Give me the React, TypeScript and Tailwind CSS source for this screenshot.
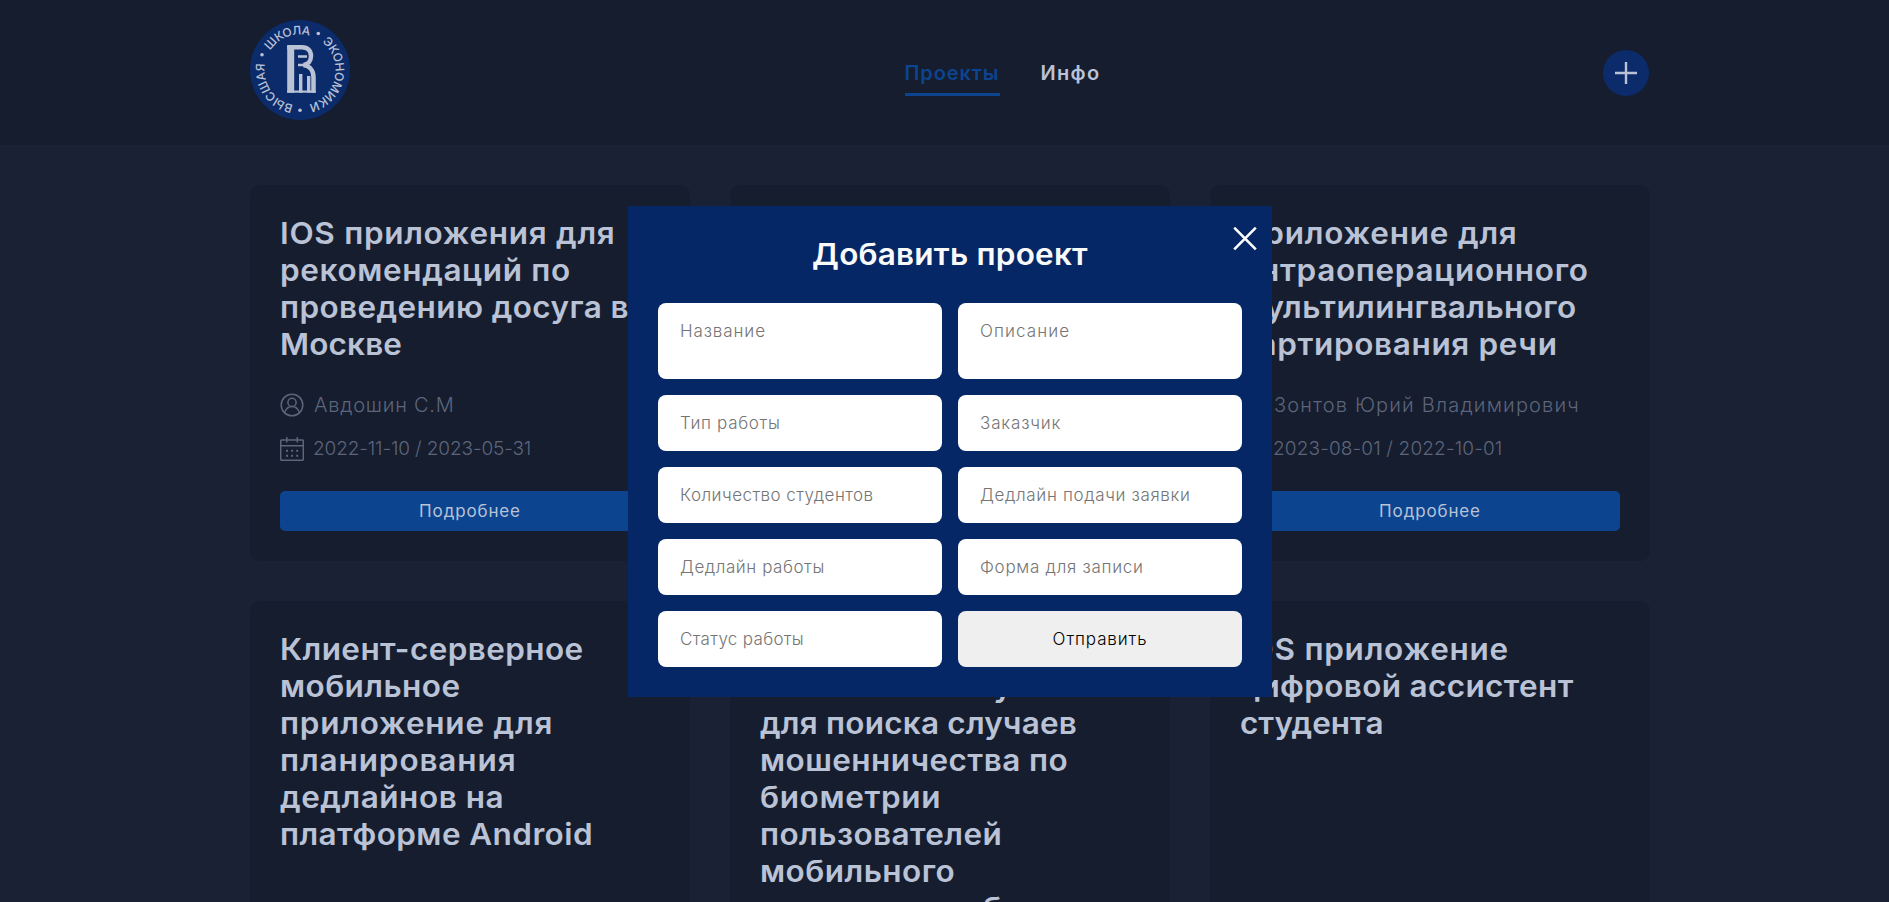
import React from "react";

type Line = [text: string, tracking: string];

interface Project {
  title: Line[];
  person: Line;
  dates: Line;
}

const defaultPerson: Line = ["Авдошин С.М", "tracking-[0.77px]"];
const defaultDates: Line = ["2022-11-10 / 2023-05-31", "tracking-[-0.12px]"];

const projects: Project[] = [
  {
    title: [
      ["IOS приложения для", "tracking-[0.66px]"],
      ["рекомендаций по", "tracking-[0.6px]"],
      ["проведению досуга в", "tracking-[0.38px]"],
      ["Москве", "tracking-[0.15px]"],
    ],
    person: defaultPerson,
    dates: defaultDates,
  },
  { title: [], person: defaultPerson, dates: defaultDates },
  {
    title: [
      ["Приложение для", "tracking-[0.74px]"],
      ["интраоперационного", "tracking-[0.65px]"],
      ["мультилингвального", "tracking-[0.38px]"],
      ["картирования речи", "tracking-[0.6px]"],
    ],
    person: ["Зонтов Юрий Владимирович", "tracking-[1.15px]"],
    dates: ["2023-08-01 / 2022-10-01", "tracking-[0.15px]"],
  },
  {
    title: [
      ["Клиент-серверное", "tracking-[0.38px]"],
      ["мобильное", "tracking-[0.4px]"],
      ["приложение для", "tracking-[0.74px]"],
      ["планирования", "tracking-[0.84px]"],
      ["дедлайнов на", "tracking-[0.5px]"],
      ["платформе Android", "tracking-[0.4px]"],
    ],
    person: defaultPerson,
    dates: defaultDates,
  },
  {
    title: [
      ["Использование", "tracking-[0.5px]"],
      ["машинного обучения", "tracking-[0.63px]"],
      ["для поиска случаев", "tracking-[0.2px]"],
      ["мошенничества по", "tracking-[0.4px]"],
      ["биометрии", "tracking-[0.6px]"],
      ["пользователей", "tracking-[0.4px]"],
      ["мобильного", "tracking-[0.44px]"],
      ["приложения с банка", "tracking-[-0.6px]"],
    ],
    person: defaultPerson,
    dates: defaultDates,
  },
  {
    title: [
      ["IOS приложение", "tracking-[0.72px]"],
      ["цифровой ассистент", "tracking-[0.34px]"],
      ["студента", "tracking-[0px]"],
    ],
    person: defaultPerson,
    dates: defaultDates,
  },
];

const fields: Line[] = [
  ["Тип работы", "tracking-[0.66px]"],
  ["Заказчик", "tracking-[0.84px]"],
  ["Количество студентов", "tracking-[0.46px]"],
  ["Дедлайн подачи заявки", "tracking-[0.65px]"],
  ["Дедлайн работы", "tracking-[0.55px]"],
  ["Форма для записи", "tracking-[0.72px]"],
  ["Статус работы", "tracking-[0.32px]"],
];

const ring = "M50 14.5 A35.5 35.5 0 1 1 50 85.5 A35.5 35.5 0 1 1 50 14.5";

function Logo() {
  return (
    <svg className="size-[100px]" viewBox="0 0 100 100">
      <circle cx="50" cy="50" r="50" fill="#0c2b6b" />
      <defs>
        <path id="ring" d={ring} />
      </defs>
      <g fill="#bac2d6" fontFamily="Inter, sans-serif" fontSize="12" fontWeight="500">
        <g transform="rotate(303 50 50)">
          <text textLength="45"><textPath href="#ring" textLength="45">ШКОЛА</textPath></text>
        </g>
        <g transform="rotate(38 50 50)">
          <text textLength="79"><textPath href="#ring" textLength="79">ЭКОНОМИКИ</textPath></text>
        </g>
        <g transform="rotate(191 50 50)">
          <text textLength="55"><textPath href="#ring" textLength="55">ВЫСШАЯ</textPath></text>
        </g>
        <circle cx="68.3" cy="13.5" r="1.8" />
        <circle cx="12" cy="34.7" r="1.8" />
        <circle cx="50" cy="90.3" r="1.8" />
      </g>
      <g fill="none" stroke="#bac2d6">
        <path d="M40.7 25.7V72.7" strokeWidth="7" />
        <path d="M37.2 27.2H52C58 27.2 61 31 61 36C61 41 58 44.5 53.5 45C60 46 63.5 51 63.5 57V72.7" strokeWidth="4.5" />
        <path d="M48 36.5H57M48 45H55" strokeWidth="2.4" />
        <path d="M50.7 72.7V54M58.7 72.7V56" strokeWidth="3.4" />
        <path d="M37.2 71.6H65.7" strokeWidth="2.2" />
      </g>
    </svg>
  );
}

function PersonIcon() {
  return (
    <svg className="size-6 shrink-0" viewBox="0 0 24 24" fill="none" stroke="#5d657b" strokeWidth="1.5">
      <circle cx="12" cy="12" r="10.8" />
      <circle cx="12" cy="9.4" r="4.1" />
      <path d="M4.6 19.6C6 15.8 8.7 13.6 12 13.6C15.3 13.6 18 15.8 19.4 19.6" />
    </svg>
  );
}

function CalendarIcon() {
  return (
    <svg className="size-6 shrink-0" viewBox="0 0 24 24" fill="none" stroke="#5d657b" strokeWidth="1.5">
      <rect x="0.7" y="3" width="22.6" height="20.3" rx="1" />
      <path d="M0.7 8.7H23.3M6.8 0V5.6M17.3 0V5.6" />
      <path d="M6 13.8H18.5M6 18.8H18.5" strokeWidth="2" strokeDasharray="2 3.1" />
    </svg>
  );
}

function Card({ project }: { project: Project }) {
  return (
    <article className="flex flex-col rounded-[10px] bg-[#151d2e] p-[30px]">
      <h2 className="min-h-[148px] text-[30px] leading-[37px] font-semibold text-[#bac2d6]">
        {project.title.map(([text, tracking]) => (
          <span key={text} className={`block w-max origin-left scale-x-105 whitespace-nowrap ${tracking}`}>
            {text}
          </span>
        ))}
      </h2>
      <div className="mt-auto flex flex-col gap-5 pt-[30px] text-[#5d657b]">
        <div className="flex h-6 items-center gap-2.5 text-[20px] font-light">
          <PersonIcon />
          <span className={project.person[1]}>{project.person[0]}</span>
        </div>
        <div className="flex h-6 items-center gap-[9px] text-[19px] font-light">
          <CalendarIcon />
          <span className={`pt-px ${project.dates[1]}`}>{project.dates[0]}</span>
        </div>
      </div>
      <button className="mt-[30px] h-10 shrink-0 rounded-[5px] bg-[#0d448f] pt-0.5 text-[17px] tracking-[0.86px] text-[#bac2d6]">
        Подробнее
      </button>
    </article>
  );
}

function Header() {
  return (
    <header className="h-[145px] bg-[#151d2e]">
      <div className="mx-auto flex h-full w-[1400px] items-center justify-between pr-px">
        <div className="flex h-full w-[100px] items-start pt-5">
          <Logo />
        </div>
        <nav className="flex gap-[41px] pl-[52px] text-[20px] leading-6 font-semibold text-[#bac2d6]">
          <a className="flex h-[46px] w-[95px] flex-col border-b-3 border-[#0d448f] pt-[11px] tracking-[0.9px] text-[#0d448f]">
            <span>Проекты</span>
          </a>
          <a className="pt-[11px] tracking-[1.3px]">Инфо</a>
        </nav>
        <button className="flex size-[46px] items-center justify-center rounded-full bg-[#0c2b6b]">
          <svg className="size-[22px]" viewBox="0 0 22 22" stroke="#bac2d6" strokeWidth="2.4">
            <path d="M11 0V22M0 11H22" />
          </svg>
        </button>
      </div>
    </header>
  );
}

const fieldClass =
  "rounded-lg bg-white pl-[22px] pr-5 text-[17px] font-light text-black outline-none placeholder:text-[#757575] placeholder:opacity-100";

function AddProjectModal() {
  return (
    <div className="absolute inset-0 flex items-start justify-center pt-[206px]">
      <form className="relative w-[644px] bg-[#062766] p-[30px]">
        <button type="button" className="absolute top-[21px] right-[15px]">
          <svg className="size-6" viewBox="0 0 24 24" stroke="#ffffff" strokeWidth="2.6">
            <path d="M1.2 0.7L22.8 22.3M22.8 0.7L1.2 22.3" />
          </svg>
        </button>
        <h2 className="scale-x-105 text-center text-[30px] leading-[37px] font-semibold tracking-[0.2px] text-[#fafafa]">
          Добавить проект
        </h2>
        <div className="mt-[30px] grid grid-cols-2 gap-4">
          <textarea placeholder="Название" className={`${fieldClass} h-[76px] resize-none pt-[18px] leading-[21px] tracking-[0.9px]`} />
          <textarea placeholder="Описание" className={`${fieldClass} h-[76px] resize-none pt-[18px] leading-[21px] tracking-[1.08px]`} />
          {fields.map(([text, tracking]) => (
            <input key={text} placeholder={text} className={`${fieldClass} h-14 ${tracking}`} />
          ))}
          <button type="button" className="h-14 rounded-lg bg-[#efefef] pt-0.5 text-[17px] font-light tracking-[0.89px] text-black">
            Отправить
          </button>
        </div>
      </form>
    </div>
  );
}

export default function App() {
  return (
    <div className="h-[902px] overflow-hidden">
      <div className="relative h-[902px] w-[1900px] overflow-hidden bg-[#1a2135] font-['Inter',sans-serif]">
        <Header />
        <main className="mx-auto grid w-[1400px] grid-cols-3 gap-10 pt-10">
          {projects.map((project, i) => (
            <Card key={i} project={project} />
          ))}
        </main>
        <AddProjectModal />
      </div>
    </div>
  );
}
